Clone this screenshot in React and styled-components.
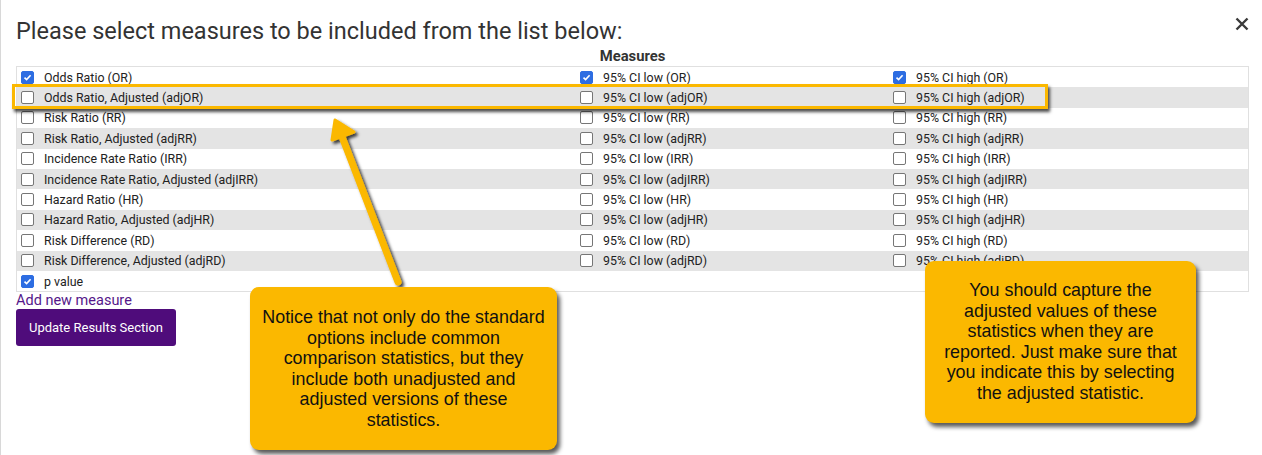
import React from "react";
import styled, { createGlobalStyle } from "styled-components";

const GlobalStyle = createGlobalStyle`
  html, body {
    margin: 0;
    padding: 0;
    background: #fff;
  }
  body {
    font-family: Roboto, "Liberation Sans", sans-serif;
  }
`;

const ORANGE = "#fbb800";

const rows = [
  { name: "Odds Ratio (OR)", low: "95% CI low (OR)", high: "95% CI high (OR)", on: true },
  { name: "Odds Ratio, Adjusted (adjOR)", low: "95% CI low (adjOR)", high: "95% CI high (adjOR)" },
  { name: "Risk Ratio (RR)", low: "95% CI low (RR)", high: "95% CI high (RR)" },
  { name: "Risk Ratio, Adjusted (adjRR)", low: "95% CI low (adjRR)", high: "95% CI high (adjRR)" },
  { name: "Incidence Rate Ratio (IRR)", low: "95% CI low (IRR)", high: "95% CI high (IRR)" },
  { name: "Incidence Rate Ratio, Adjusted (adjIRR)", low: "95% CI low (adjIRR)", high: "95% CI high (adjIRR)" },
  { name: "Hazard Ratio (HR)", low: "95% CI low (HR)", high: "95% CI high (HR)" },
  { name: "Hazard Ratio, Adjusted (adjHR)", low: "95% CI low (adjHR)", high: "95% CI high (adjHR)" },
  { name: "Risk Difference (RD)", low: "95% CI low (RD)", high: "95% CI high (RD)" },
  { name: "Risk Difference, Adjusted (adjRD)", low: "95% CI low (adjRD)", high: "95% CI high (adjRD)" },
  { name: "p value", on: true },
];

const note1 = [
  "Notice that not only do the standard",
  "options include common",
  "comparison statistics, but they",
  "include both unadjusted and",
  "adjusted versions of these",
  "statistics.",
];

const note2 = [
  "You should capture the",
  "adjusted values of these",
  "statistics when they are",
  "reported. Just make sure that",
  "you indicate this by selecting",
  "the adjusted statistic.",
];

const Check = ({ on }) => (
  <Box $on={on}>
    {on && (
      <svg width="9" height="9" viewBox="0 0 9 9">
        <path d="M1.5 4.6 L3.6 6.6 L7.6 2.2" fill="none" stroke="#fff" strokeWidth="1.6" />
      </svg>
    )}
  </Box>
);

const Cell = ({ label, on }) => (
  <CellWrap>
    {label && <Check on={on} />}
    {label && <span>{label}</span>}
  </CellWrap>
);

const App = () => {
  return (
    <Page>
      <GlobalStyle />
      <Modal>
        <TitleBar>
          <Title>Please select measures to be included from the list below:</Title>
          <Close>
            <svg width="14" height="14" viewBox="0 0 14 14">
              <path d="M1.5 1.5 L12.5 12.5 M12.5 1.5 L1.5 12.5" stroke="#3a3a3a" strokeWidth="2.4" />
            </svg>
          </Close>
        </TitleBar>
        <Heading>Measures</Heading>
        <Table>
          {rows.map((r, i) => (
            <Row key={r.name} $striped={i % 2 === 1}>
              <Cell label={r.name} on={r.on} />
              <Cell label={r.low} on={r.on} />
              <Cell label={r.high} on={r.on} />
            </Row>
          ))}
        </Table>
        <AddLink>Add new measure</AddLink>
        <UpdateButton>Update Results Section</UpdateButton>
      </Modal>

      <Highlight />
      <Arrow width="90" height="190" viewBox="0 0 90 190">
        <defs>
          <filter id="sh" x="-50%" y="-50%" width="200%" height="200%">
            <feDropShadow dx="2.5" dy="2.5" stdDeviation="1.6" floodColor="#000" floodOpacity="0.75" />
          </filter>
        </defs>
        <g filter="url(#sh)">
          <line x1="80" y1="172" x2="23" y2="24" stroke={ORANGE} strokeWidth="7" strokeLinecap="round" />
          <path d="M17 10 L36 22 L14 30 Z" fill={ORANGE} stroke={ORANGE} strokeWidth="3" strokeLinejoin="round" />
        </g>
      </Arrow>
      <Callout $left={250} $top={287} $width={307} $height={163} $pad={20}>
        {note1.map((l) => (
          <Line key={l}>{l}</Line>
        ))}
      </Callout>
      <Callout $left={925} $top={261} $width={271} $height={162} $pad={19}>
        {note2.map((l) => (
          <Line key={l}>{l}</Line>
        ))}
      </Callout>
    </Page>
  );
};

export default App;

const Page = styled.div`
  position: relative;
  width: 1262px;
  height: 455px;
  overflow: hidden;
`;

const Modal = styled.div`
  height: 100%;
  box-sizing: border-box;
  border-left: 1px solid #d8d8d8;
  padding: 14px 13px 0 15px;
  display: flex;
  flex-direction: column;
  align-items: flex-start;
`;

const TitleBar = styled.div`
  width: 100%;
  display: flex;
  justify-content: space-between;
  align-items: flex-start;
`;

const Title = styled.h2`
  margin: 0;
  font-size: 23.5px;
  font-weight: 400;
  line-height: 34px;
  color: #333;
`;

const Close = styled.div`
  margin-top: 2px;
  width: 14px;
  height: 14px;
`;

const Heading = styled.div`
  width: 100%;
  text-align: center;
  font-size: 14.8px;
  font-weight: 700;
  line-height: 16px;
  color: #333;
  margin-bottom: 2px;
`;

const Table = styled.div`
  width: 100%;
  border: 1px solid #e0e0e0;
  box-sizing: border-box;
`;

const Row = styled.div`
  display: grid;
  grid-template-columns: 559px 313px 1fr;
  height: 20.4px;
  align-items: center;
  background: ${(p) => (p.$striped ? "#e4e4e4" : "#fff")};
`;

const CellWrap = styled.div`
  display: flex;
  align-items: center;
  gap: 10px;
  padding-left: 4px;
  font-size: 12.4px;
  color: #222;
  white-space: nowrap;
`;

const Box = styled.span`
  width: 13px;
  height: 13px;
  box-sizing: border-box;
  border-radius: 2px;
  display: flex;
  align-items: center;
  justify-content: center;
  background: ${(p) => (p.$on ? "#2d6de2" : "#fff")};
  border: 1px solid ${(p) => (p.$on ? "#2d6de2" : "#767676")};
`;

const AddLink = styled.a`
  margin-top: 1px;
  font-size: 14.5px;
  line-height: 16px;
  color: #55178a;
  cursor: pointer;
`;

const UpdateButton = styled.button`
  width: 160px;
  height: 37px;
  border: none;
  border-radius: 3px;
  background: #4f0c7b;
  color: #fff;
  font-family: Roboto, "Liberation Sans", sans-serif;
  font-size: 13px;
  font-weight: 400;
`;

const Highlight = styled.div`
  position: absolute;
  left: 12px;
  top: 84px;
  width: 1036px;
  height: 25px;
  box-sizing: border-box;
  border: 3px solid ${ORANGE};
  box-shadow: 2px 3px 3px rgba(0, 0, 0, 0.7);
`;

const Arrow = styled.svg`
  position: absolute;
  left: 318px;
  top: 110px;
  overflow: visible;
`;

const Callout = styled.div`
  position: absolute;
  left: ${(p) => p.$left}px;
  top: ${(p) => p.$top}px;
  width: ${(p) => p.$width}px;
  height: ${(p) => p.$height}px;
  box-sizing: border-box;
  padding: ${(p) => p.$pad}px 6px 0;
  background: ${ORANGE};
  border-radius: 9px;
  box-shadow: 3px 4px 4px rgba(0, 0, 0, 0.65);
  font-family: Arial, "Liberation Sans", sans-serif;
  font-size: 17.9px;
  line-height: 20.6px;
  color: #111;
  text-align: center;
`;

const Line = styled.div`
  white-space: nowrap;
`;
